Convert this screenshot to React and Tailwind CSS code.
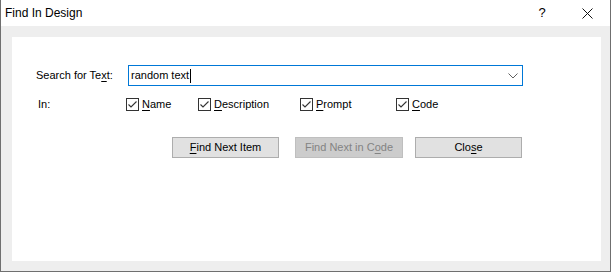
import React from "react";

const font = { fontFamily: '"Liberation Sans", Arial, sans-serif' };

function Check({ u, rest, width }) {
  return (
    <div className={`flex items-center ${width}`}>
      <div className="w-[13px] h-[13px] border border-[#333333] bg-white flex items-center justify-center">
        <svg width="11" height="11" viewBox="0 0 11 11">
          <polyline points="1.5,5.5 4,8 9.5,2.5" fill="none" stroke="#333333" strokeWidth="1.1" />
        </svg>
      </div>
      <span className="ml-[3px] text-[11px] text-black leading-none">
        <span className="underline underline-offset-2">{u}</span>
        {rest}
      </span>
    </div>
  );
}

function Button({ children, disabled, className }) {
  return (
    <div
      className={`h-[21px] flex items-center justify-center border text-[11px] leading-none ${
        disabled
          ? "bg-[#cccccc] border-[#bfbfbf] text-[#838383]"
          : "bg-[#e1e1e1] border-[#adadad] text-black"
      } ${className}`}
    >
      {children}
    </div>
  );
}

export default function App() {
  return (
    <div
      style={font}
      className="w-[611px] h-[272px] flex flex-col bg-[#eeeeee] border-x border-b border-[#6f6f6f]"
    >
      {/* title bar */}
      <div className="h-[26px] bg-white flex items-center justify-between">
        <span className="pl-[4px] text-[12px] text-black">Find In Design</span>
        <div className="flex h-full">
          <div className="w-[46px] flex items-center justify-center text-[13px] text-black">?</div>
          <div className="w-[45px] flex items-center justify-center">
            <svg width="11" height="11" viewBox="0 0 11 11">
              <path d="M0.5 0.5 L10.5 10.5 M10.5 0.5 L0.5 10.5" stroke="#111111" strokeWidth="1" />
            </svg>
          </div>
        </div>
      </div>

      {/* body */}
      <div className="flex-1 flex flex-col pl-[11px] pr-[9px] pt-[11px] pb-[10px]">
        <div className="flex-1 bg-white flex flex-col pt-[28px]">
          {/* search row */}
          <div className="flex items-center h-[21px]">
            <span className="pl-[24px] w-[116px] text-[11px] text-black leading-none">
              Search for Te<span className="underline underline-offset-2">x</span>t:
            </span>
            <div className="w-[395px] h-[21px] border border-[#0078d7] flex items-center justify-between pl-[2px] pr-[4px]">
              <div className="flex items-center text-[11px] text-black leading-none">
                random text<span className="w-px h-[14px] bg-black ml-px" />
              </div>
              <svg width="10" height="6" viewBox="0 0 10 6">
                <polyline points="0.5,0.5 5,5 9.5,0.5" fill="none" stroke="#606060" strokeWidth="1" />
              </svg>
            </div>
          </div>

          {/* in row */}
          <div className="flex items-center h-[13px] mt-[12px]">
            <span className="pl-[26px] w-[114px] text-[11px] text-black leading-none">In:</span>
            <Check width="w-[72px]" u="N" rest="ame" />
            <Check width="w-[102px]" u="D" rest="escription" />
            <Check width="w-[96px]" u="P" rest="rompt" />
            <Check width="w-[80px]" u="C" rest="ode" />
          </div>

          {/* buttons */}
          <div className="flex mt-[26px] pl-[160px]">
            <Button className="w-[107px]">
              <span>
                <span className="underline underline-offset-2">F</span>ind Next Item
              </span>
            </Button>
            <Button disabled className="w-[108px] ml-[16px]">
              <span>
                Find Next in C<span className="underline underline-offset-2">o</span>de
              </span>
            </Button>
            <Button className="w-[107px] ml-[12px]">
              <span>
                Clo<span className="underline underline-offset-2">s</span>e
              </span>
            </Button>
          </div>
        </div>
      </div>
    </div>
  );
}
